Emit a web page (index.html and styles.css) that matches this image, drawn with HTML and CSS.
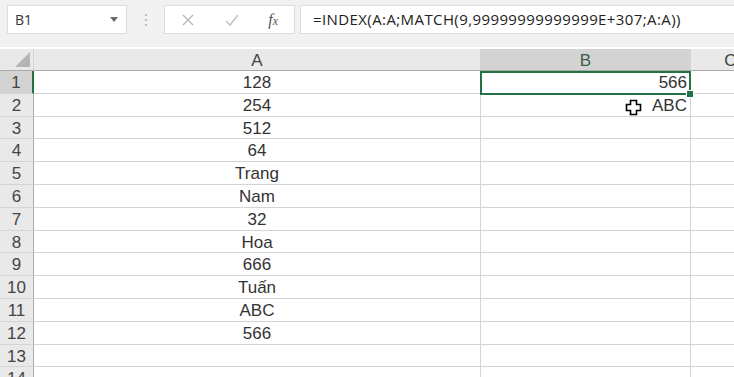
FILE: index.html
```html
<!DOCTYPE html>
<html lang="en">
<head>
  <meta charset="UTF-8">
  <title>Sheet</title>
  <link rel="stylesheet" href="styles.css">
</head>
<body>
  <div class="toolbar">
    <div class="namebox">
      <span>B1</span>
      <svg class="caret" width="8" height="5" viewBox="0 0 8 5"><path d="M0 0h8L4 5z" fill="#6b6b6b"/></svg>
    </div>
    <div class="grip"><i></i><i></i><i></i></div>
    <div class="fxbox">
      <svg width="14" height="14" viewBox="0 0 14 14"><path d="M2 2l10 10M12 2L2 12" stroke="#b9b9b9" stroke-width="1.4" fill="none"/></svg>
      <svg width="16" height="14" viewBox="0 0 16 14"><path d="M2 8l4 4L14 2" stroke="#c4c4c4" stroke-width="1.6" fill="none"/></svg>
      <span class="fx"><i>f</i><i class="x">x</i></span>
    </div>
    <div class="formula">=INDEX(A:A;MATCH(9,99999999999999E+307;A:A))</div>
  </div>

  <div class="sheet">
    <div class="corner"><svg width="15" height="15" viewBox="0 0 15 15"><path d="M15 0v15H0z" fill="#b4b4b4"/></svg></div>
    <div class="colhead">A</div>
    <div class="colhead active">B</div>
    <div class="colhead">C</div>

    <div class="rowhead active">1</div><div class="cell center">128</div><div class="cell right">566</div><div class="cell"></div>
    <div class="rowhead">2</div><div class="cell center">254</div><div class="cell right">ABC</div><div class="cell"></div>
    <div class="rowhead">3</div><div class="cell center">512</div><div class="cell"></div><div class="cell"></div>
    <div class="rowhead">4</div><div class="cell center">64</div><div class="cell"></div><div class="cell"></div>
    <div class="rowhead">5</div><div class="cell center">Trang</div><div class="cell"></div><div class="cell"></div>
    <div class="rowhead">6</div><div class="cell center">Nam</div><div class="cell"></div><div class="cell"></div>
    <div class="rowhead">7</div><div class="cell center">32</div><div class="cell"></div><div class="cell"></div>
    <div class="rowhead">8</div><div class="cell center">Hoa</div><div class="cell"></div><div class="cell"></div>
    <div class="rowhead">9</div><div class="cell center">666</div><div class="cell"></div><div class="cell"></div>
    <div class="rowhead">10</div><div class="cell center">Tuấn</div><div class="cell"></div><div class="cell"></div>
    <div class="rowhead">11</div><div class="cell center">ABC</div><div class="cell"></div><div class="cell"></div>
    <div class="rowhead">12</div><div class="cell center">566</div><div class="cell"></div><div class="cell"></div>
    <div class="rowhead">13</div><div class="cell"></div><div class="cell"></div><div class="cell"></div>
    <div class="rowhead">14</div><div class="cell"></div><div class="cell"></div><div class="cell"></div>

    <!-- selection box on B1 and the mouse cursor -->
    <div class="selection"><span class="handle"></span></div>
    <svg class="cursor" width="17" height="17" viewBox="0 0 17 17">
      <path d="M5.5 1.5h6v4h4v6h-4v4h-6v-4h-4v-6h4z" fill="#fff" stroke="#000" stroke-width="1.6"/>
    </svg>
  </div>
</body>
</html>
```

FILE: styles.css
```css
body { margin: 0; background: #f1f1f1; overflow: hidden; }

.toolbar { display: flex; align-items: center; height: 39px; padding: 0 0 0 7px; background: #f1f1f1; }
.namebox { display: flex; align-items: center; justify-content: space-between; width: 120px; height: 29px; box-sizing: border-box; padding: 0 8px 0 7px; background: #fff; border: 1px solid #dcdcdc; font-family: "Open Sans", sans-serif; font-size: 14px; color: #333; }
.grip { display: flex; flex-direction: column; gap: 3px; margin: 0 17px 0 18px; }
.grip i { display: block; width: 2px; height: 2px; background: #bdbdbd; }
.fxbox { display: flex; align-items: center; justify-content: space-between; width: 131px; height: 29px; box-sizing: border-box; padding: 0 16px 0 16px; background: #fff; border: 1px solid #dcdcdc; }
.fx { font-family: "Liberation Serif", serif; font-size: 16px; color: #555; }
.fx .x { font-size: 12px; }
.formula { flex: 1; min-width: 0; height: 29px; box-sizing: border-box; margin-left: 5px; padding: 0 0 0 12px; background: #fff; border: 1px solid #dcdcdc; border-right: none; font-family: "Open Sans", sans-serif; font-size: 15px; letter-spacing: 0.4px; line-height: 27px; color: #222; white-space: nowrap; overflow: hidden; }

.sheet { position: relative; display: grid; grid-template-columns: 34px 447px 210px 80px; grid-template-rows: 22px; grid-auto-rows: 22.8px; margin-top: 8px; padding-top: 2px; background: #fff; font-family: "Liberation Sans", Arial, sans-serif; overflow: hidden; }
.corner { display: flex; align-items: flex-end; justify-content: flex-end; padding: 0 3px 3px 0; background: #e9e9e9; border-right: 1px solid #d4d4d4; border-bottom: 1px solid #ababab; }
.colhead { background: #e9e9e9; border-right: 1px solid #d4d4d4; border-bottom: 1px solid #ababab; text-align: center; font-size: 17px; line-height: 23px; color: #444; }
.colhead.active { background: #d3d3d3; color: #3b5e45; }
.rowhead { background: #e9e9e9; border-right: 1px solid #ababab; border-bottom: 1px solid #d4d4d4; text-align: center; font-size: 17px; line-height: 24px; color: #444; }
.rowhead.active { background: #d3d3d3; border-right: 2px solid #217346; }
.cell { border-right: 1px solid #d4d4d4; border-bottom: 1px solid #d4d4d4; font-size: 17px; line-height: 24px; color: #333; white-space: nowrap; }
.cell.center { text-align: center; }
.cell.right { text-align: right; padding-right: 3px; }

.selection { position: absolute; left: 480px; top: 24px; width: 211px; height: 24px; box-sizing: border-box; border: 2px solid #217346; }
.handle { position: absolute; right: -5px; bottom: -5px; width: 6px; height: 6px; background: #217346; border: 1px solid #fff; }
.cursor { position: absolute; left: 625px; top: 52px; }
```
